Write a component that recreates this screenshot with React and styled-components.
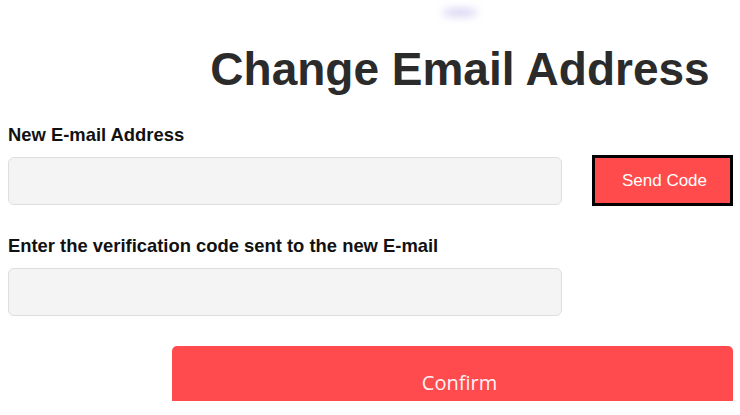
import React from 'react';
import styled, { createGlobalStyle } from 'styled-components';

const GlobalStyle = createGlobalStyle`
  html, body {
    margin: 0;
    padding: 0;
    background: #fff;
    overflow: hidden;
  }
  body {
    font-family: "Liberation Sans", Arial, sans-serif;
  }
`;

const Page = styled.div`
  width: 740px;
  height: 415px;
  padding: 0 8px;
  box-sizing: border-box;
  overflow: hidden;
`;

const Header = styled.div`
  margin-left: 164px;
  width: 576px;
  display: flex;
  flex-direction: column;
  align-items: center;
`;

const Glow = styled.div`
  width: 36px;
  height: 7px;
  margin: 9px 0 26px;
  border-radius: 50%;
  background: #cfcaf0;
  filter: blur(4px);
`;

const Title = styled.h1`
  margin: 0;
  font-size: 46px;
  line-height: 54px;
  font-weight: 700;
  color: #2b2b2b;
`;

const Field = styled.div`
  margin-top: ${(p) => p.$gap}px;
`;

const Label = styled.label`
  display: block;
  font-size: 18.4px;
  line-height: 21px;
  font-weight: 700;
  color: #111;
  margin-bottom: 12px;
`;

const Row = styled.div`
  display: flex;
  align-items: center;
  gap: 30px;
`;

const Input = styled.input`
  flex-shrink: 0;
  width: 554px;
  height: 48px;
  box-sizing: border-box;
  background: #f4f4f4;
  border: 1px solid #dedede;
  border-radius: 6px;
  outline: none;
`;

const SendButton = styled.button`
  flex-shrink: 0;
  width: 141px;
  height: 51px;
  margin: -2px 0 -1px;
  box-sizing: border-box;
  background: #ff4b4b;
  border: 3px solid #000;
  color: #fff;
  font-family: "Liberation Sans", Arial, sans-serif;
  font-size: 17px;
  padding: 0 0 0 4px;
`;

const ConfirmButton = styled.button`
  display: block;
  margin: 30px 0 0 164px;
  width: 561px;
  height: 55px;
  box-sizing: border-box;
  padding: 17px 0 0 14px;
  border: none;
  border-radius: 5px 5px 0 0;
  background: #ff4b4d;
  color: #fff4f4;
  font-family: "Open Sans", "Noto Sans", sans-serif;
  font-size: 20px;
`;

const App = () => {
  return (
    <>
      <GlobalStyle />
      <Page>
        <Header>
          <Glow />
          <Title>Change Email Address</Title>
        </Header>
        <Field $gap={28}>
          <Label>New E-mail Address</Label>
          <Row>
            <Input type="email" />
            <SendButton>Send Code</SendButton>
          </Row>
        </Field>
        <Field $gap={30}>
          <Label>Enter the verification code sent to the new E-mail</Label>
          <Row>
            <Input type="text" />
          </Row>
        </Field>
        <ConfirmButton>Confirm</ConfirmButton>
      </Page>
    </>
  );
};

export default App;
